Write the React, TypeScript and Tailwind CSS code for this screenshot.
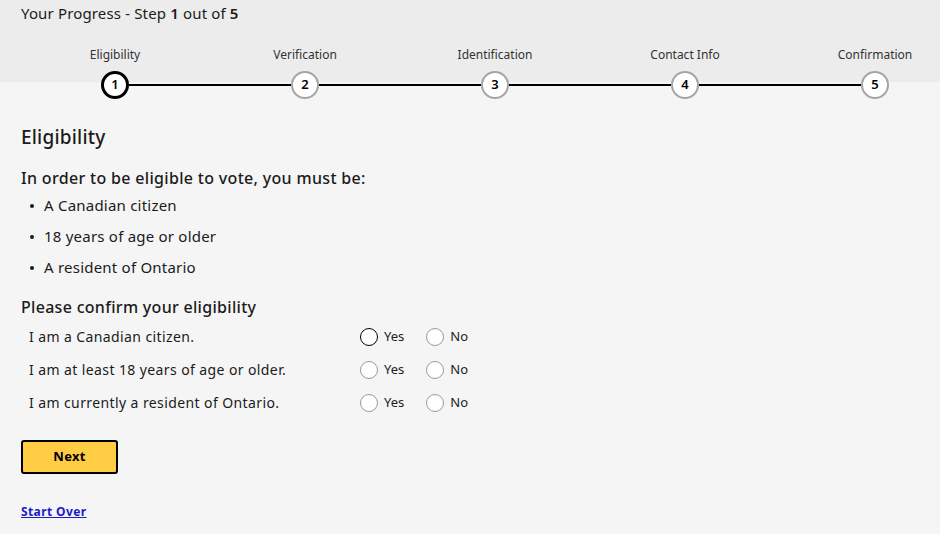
const STEPS = ['Eligibility', 'Verification', 'Identification', 'Contact Info', 'Confirmation'];

const QUESTIONS = [
  'I am a Canadian citizen.',
  'I am at least 18 years of age or older.',
  'I am currently a resident of Ontario.',
];

const Radio = ({ label, active }: { label: string; active?: boolean }) => (
  <label className="flex items-center gap-[6px] text-[13px] text-[#222]">
    <span
      className={`block w-[18px] h-[18px] rounded-full bg-white ${
        active ? 'border-[1.5px] border-black' : 'border border-[#9a9a9a]'
      }`}
    />
    {label}
  </label>
);

export default function App() {
  return (
    <div
      className="min-h-[534px] w-[940px] bg-[#f5f5f5] text-[#1b1b1b]"
      style={{ fontFamily: '"Noto Sans", "Open Sans", sans-serif' }}
    >
      {/* progress header */}
      <div className="bg-[linear-gradient(#ececec_82px,#f5f5f5_82px)] h-[98px]">
        <div className="pl-[21px] pt-[3px] text-[15px] leading-[20px] tracking-[0.15px]">
          Your Progress - Step <span className="font-semibold">1</span> out of <span className="font-semibold">5</span>
        </div>
        <div className="flex pl-[101px] pr-[51px] mt-[24px]">
          {STEPS.map((s, i) => (
            <div key={s} className="contents">
              <div className="flex flex-col items-center w-[28px]">
                <div className="whitespace-nowrap text-[12px] leading-[16px] text-[#333]">{s}</div>
                <div
                  className={`mt-[8px] w-[28px] h-[28px] shrink-0 rounded-full bg-white flex items-center justify-center text-[13px] font-semibold text-black ${
                    i === 0 ? 'border-[3px] border-black' : 'border-2 border-[#a5a5a5]'
                  }`}
                >
                  {i + 1}
                </div>
              </div>
              {i < STEPS.length - 1 && <div className="flex-1 h-[2px] bg-black self-end mb-[13px]" />}
            </div>
          ))}
        </div>
      </div>

      {/* content */}
      <div className="px-[21px]">
        <h1 className="mt-[27px] text-[19px] leading-[24px] font-medium tracking-[0.2px]">Eligibility</h1>

        <p className="mt-[18px] text-[16px] leading-[22px] font-medium tracking-[0.32px]">
          In order to be eligible to vote, you must be:
        </p>
        <ul className="pl-[8px] text-[15px] leading-[20px] tracking-[0.22px]">
          {['A Canadian citizen', '18 years of age or older', 'A resident of Ontario'].map((t) => (
            <li key={t} className="flex items-center h-[31px]">
              <span className="w-[4px] h-[4px] rounded-full bg-[#1b1b1b] ml-[1px] mr-[10px] mt-[2px]" />
              {t}
            </li>
          ))}
        </ul>

        <h2 className="mt-[14px] text-[16px] leading-[22px] font-medium tracking-[0.3px]">Please confirm your eligibility</h2>
        <div className="mt-[2px] pl-[8px]">
          {QUESTIONS.map((q, i) => (
            <div key={q} className="flex items-center h-[33px] text-[14px] tracking-[0.4px]">
              <div className="w-[331px]">{q}</div>
              <div className="flex gap-[22px] tracking-normal">
                <Radio label="Yes" active={i === 0} />
                <Radio label="No" />
              </div>
            </div>
          ))}
        </div>

        <button className="mt-[21px] w-[97px] h-[34px] rounded-[3px] border-2 border-black bg-[#ffcc44] text-[13px] font-bold text-black tracking-[0.3px]">
          Next
        </button>

        <div className="mt-[24px]">
          <a href="#" className="text-[12px] font-bold text-[#1a1acc] underline tracking-[0.4px]">
            Start Over
          </a>
        </div>
      </div>
    </div>
  );
}
